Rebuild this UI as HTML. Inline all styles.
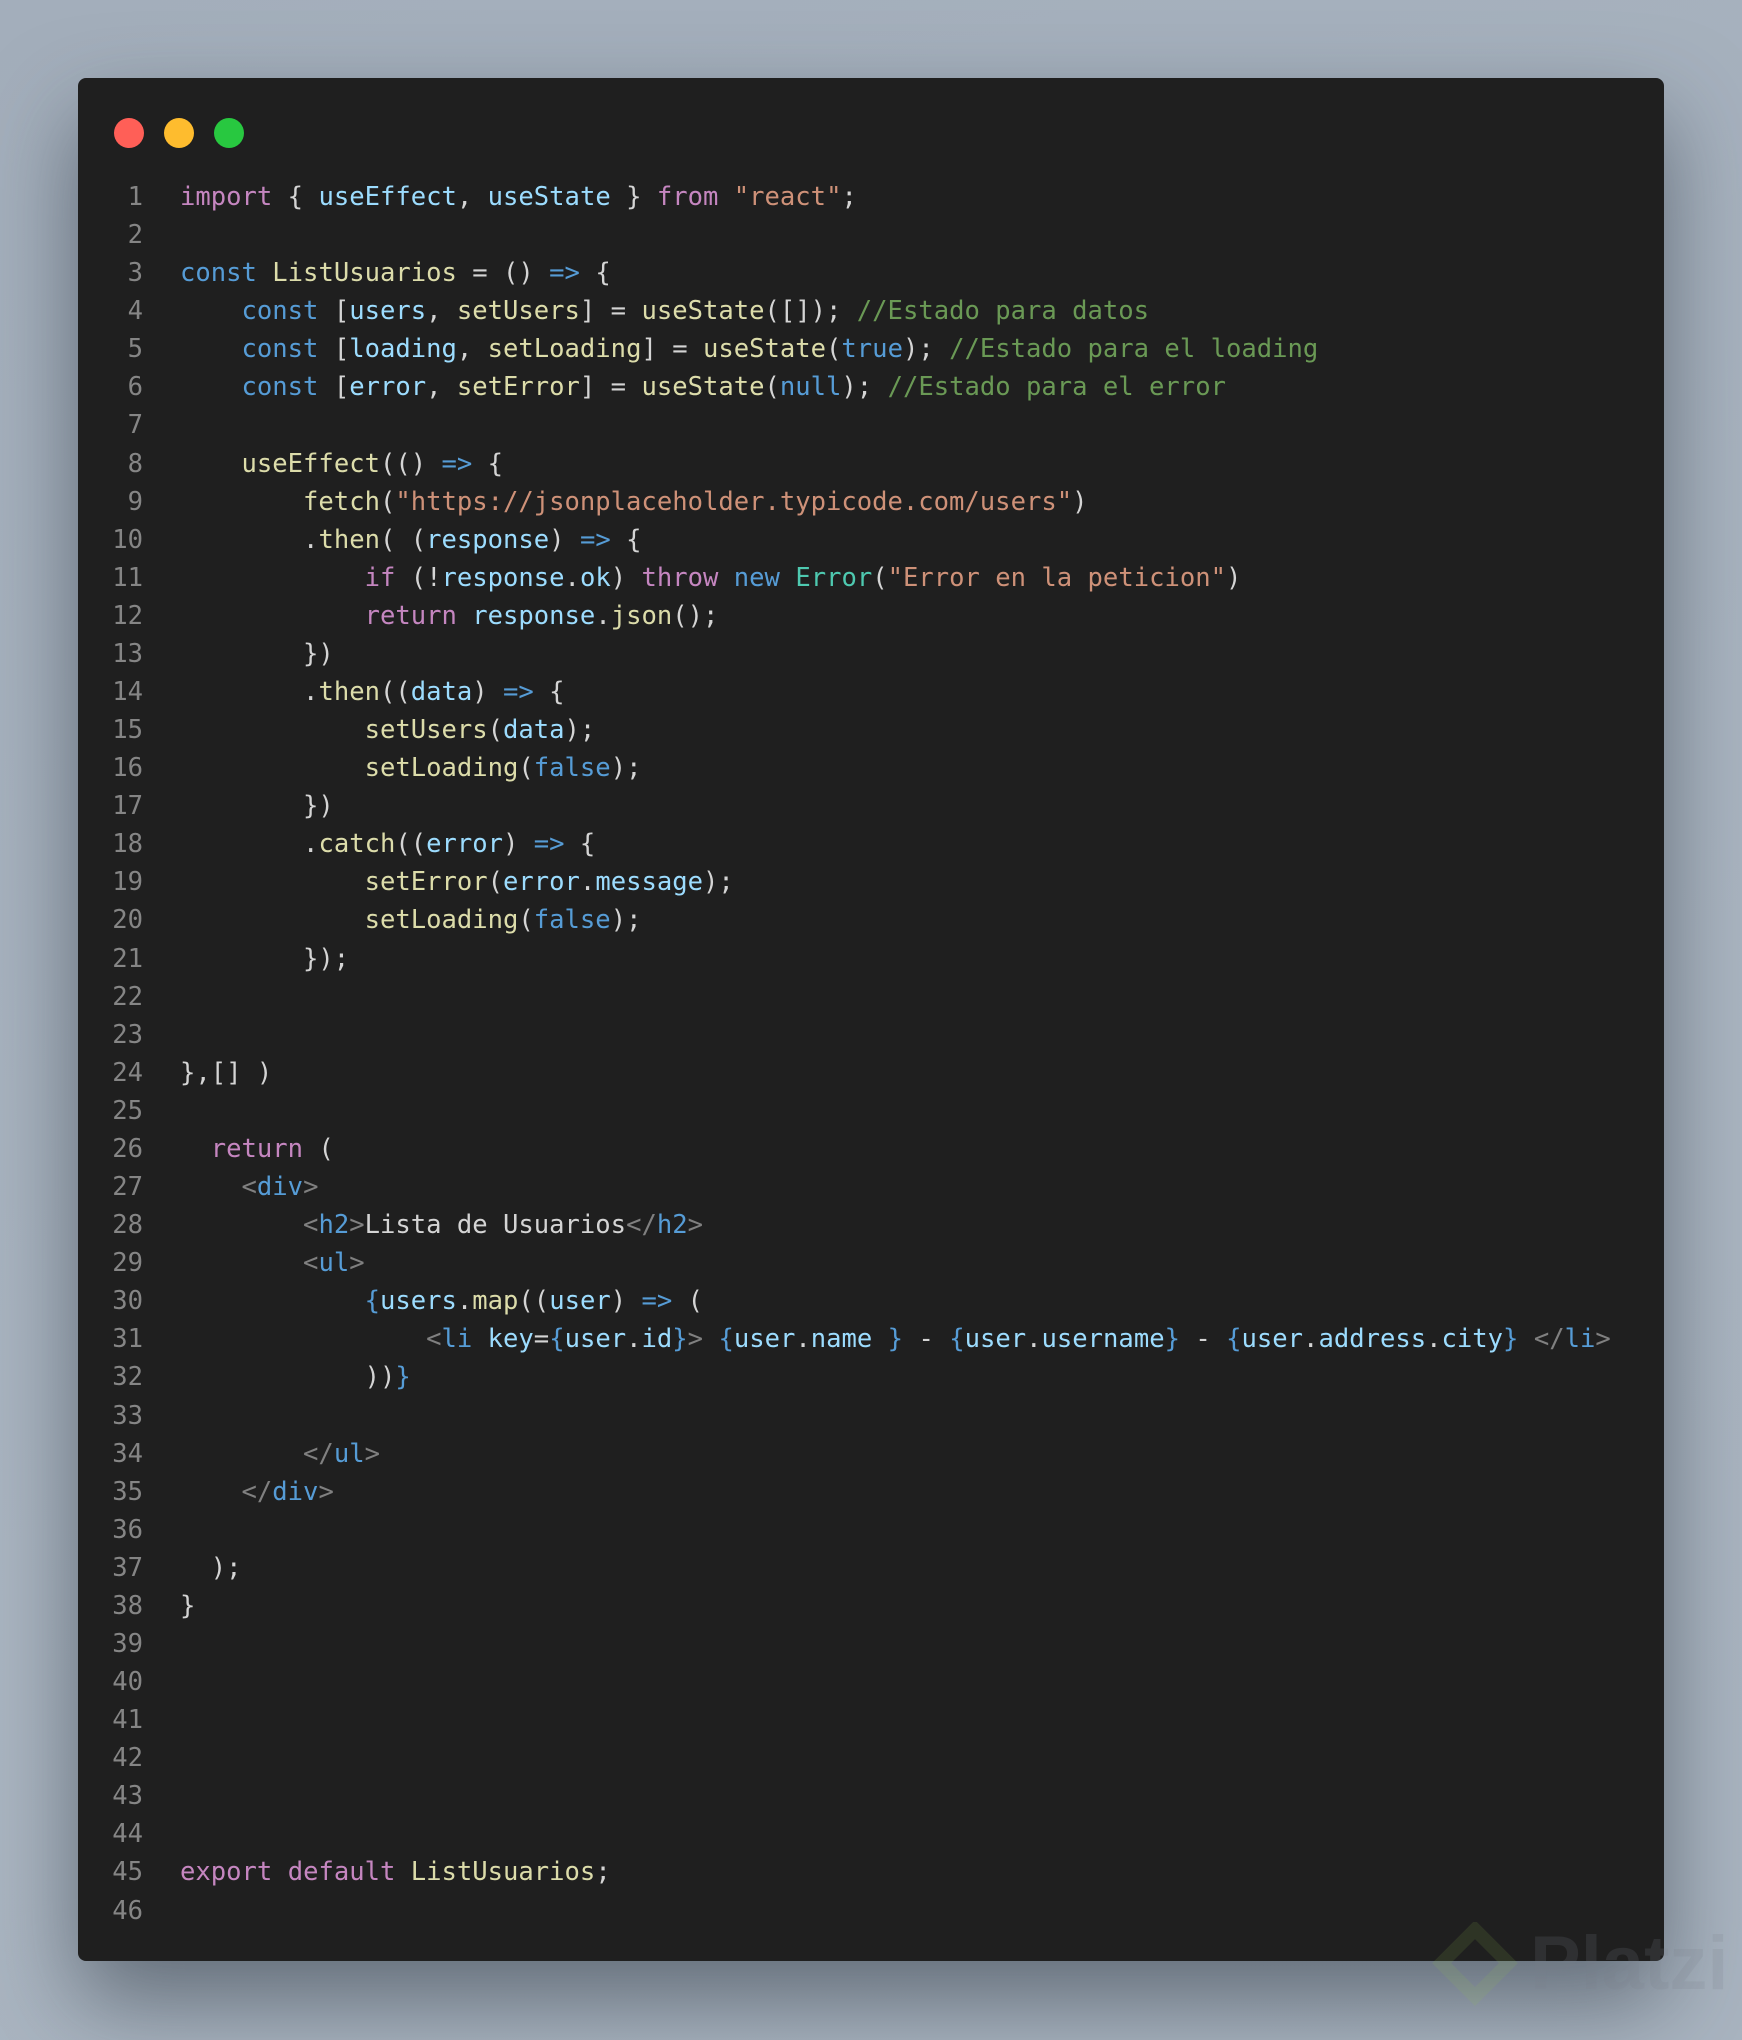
<!DOCTYPE html>
<html><head><meta charset="utf-8"><style>
html,body{margin:0;padding:0}
body{width:1742px;height:2040px;overflow:hidden;background:linear-gradient(160deg,#a3aebb 0%,#aab5c1 60%,#a9b4c0 100%);position:relative;font-family:"Liberation Mono",monospace}
.win{position:absolute;left:78px;top:78px;width:1586px;height:1883px;background:#1f1f1f;border-radius:8px;box-shadow:0 40px 90px rgba(40,50,60,.55)}
.dot{position:absolute;top:118px;width:30px;height:30px;border-radius:50%}
pre{position:absolute;margin:0;top:178px;font-size:25.55px;line-height:38.08px;white-space:pre;color:#d4d4d4}
.ln{left:80px;width:63px;text-align:right;color:#858585}
.code{left:180px}
.k{color:#c586c0}.b{color:#569cd6}.f{color:#dcdcaa}.v{color:#9cdcfe}.s{color:#ce9178}.c{color:#6a9955}.t{color:#4ec9b0}.g{color:#808080}
.wm{position:absolute;left:1530px;top:1920px;font-family:"Liberation Sans",sans-serif;font-weight:bold;font-size:76px;color:rgba(120,130,140,.18)}
</style></head><body>
<div class="win"></div>
<div class="dot" style="left:114px;background:#ff5f57"></div>
<div class="dot" style="left:164px;background:#febc2e"></div>
<div class="dot" style="left:214px;background:#28c840"></div>
<pre class="ln">1
2
3
4
5
6
7
8
9
10
11
12
13
14
15
16
17
18
19
20
21
22
23
24
25
26
27
28
29
30
31
32
33
34
35
36
37
38
39
40
41
42
43
44
45
46</pre>
<pre class="code"><span class="k">import</span> { <span class="v">useEffect</span>, <span class="v">useState</span> } <span class="k">from</span> <span class="s">"react"</span>;

<span class="b">const</span> <span class="f">ListUsuarios</span> = () <span class="b">=&gt;</span> {
    <span class="b">const</span> [<span class="v">users</span>, <span class="f">setUsers</span>] = <span class="f">useState</span>([]); <span class="c">//Estado para datos</span>
    <span class="b">const</span> [<span class="v">loading</span>, <span class="f">setLoading</span>] = <span class="f">useState</span>(<span class="b">true</span>); <span class="c">//Estado para el loading</span>
    <span class="b">const</span> [<span class="v">error</span>, <span class="f">setError</span>] = <span class="f">useState</span>(<span class="b">null</span>); <span class="c">//Estado para el error</span>

    <span class="f">useEffect</span>(() <span class="b">=&gt;</span> {
        <span class="f">fetch</span>(<span class="s">"https://jsonplaceholder.typicode.com/users"</span>)
        .<span class="f">then</span>( (<span class="v">response</span>) <span class="b">=&gt;</span> {
            <span class="k">if</span> (!<span class="v">response</span>.<span class="v">ok</span>) <span class="k">throw</span> <span class="b">new</span> <span class="t">Error</span>(<span class="s">"Error en la peticion"</span>)
            <span class="k">return</span> <span class="v">response</span>.<span class="f">json</span>();
        })
        .<span class="f">then</span>((<span class="v">data</span>) <span class="b">=&gt;</span> {
            <span class="f">setUsers</span>(<span class="v">data</span>);
            <span class="f">setLoading</span>(<span class="b">false</span>);
        })
        .<span class="f">catch</span>((<span class="v">error</span>) <span class="b">=&gt;</span> {
            <span class="f">setError</span>(<span class="v">error</span>.<span class="v">message</span>);
            <span class="f">setLoading</span>(<span class="b">false</span>);
        });


},[] )

  <span class="k">return</span> (
    <span class="g">&lt;</span><span class="b">div</span><span class="g">&gt;</span>
        <span class="g">&lt;</span><span class="b">h2</span><span class="g">&gt;</span>Lista de Usuarios<span class="g">&lt;/</span><span class="b">h2</span><span class="g">&gt;</span>
        <span class="g">&lt;</span><span class="b">ul</span><span class="g">&gt;</span>
            <span class="b">{</span><span class="v">users</span>.<span class="f">map</span>((<span class="v">user</span>) <span class="b">=&gt;</span> (
                <span class="g">&lt;</span><span class="b">li</span> <span class="v">key</span>=<span class="b">{</span><span class="v">user</span>.<span class="v">id</span><span class="b">}</span><span class="g">&gt;</span> <span class="b">{</span><span class="v">user</span>.<span class="v">name</span> <span class="b">}</span> - <span class="b">{</span><span class="v">user</span>.<span class="v">username</span><span class="b">}</span> - <span class="b">{</span><span class="v">user</span>.<span class="v">address</span>.<span class="v">city</span><span class="b">}</span> <span class="g">&lt;/</span><span class="b">li</span><span class="g">&gt;</span>
            ))<span class="b">}</span>

        <span class="g">&lt;/</span><span class="b">ul</span><span class="g">&gt;</span>
    <span class="g">&lt;/</span><span class="b">div</span><span class="g">&gt;</span>

  );
}






<span class="k">export</span> <span class="k">default</span> <span class="f">ListUsuarios</span>;
</pre>
<svg style="position:absolute;left:1432px;top:1922px" width="86" height="86" viewBox="0 0 90 90"><path d="M45 8 L80 43 L45 78 L10 43 Z" fill="none" stroke="rgba(150,190,80,.13)" stroke-width="14"/></svg>
<div class="wm">Platzi</div>
</body></html>
